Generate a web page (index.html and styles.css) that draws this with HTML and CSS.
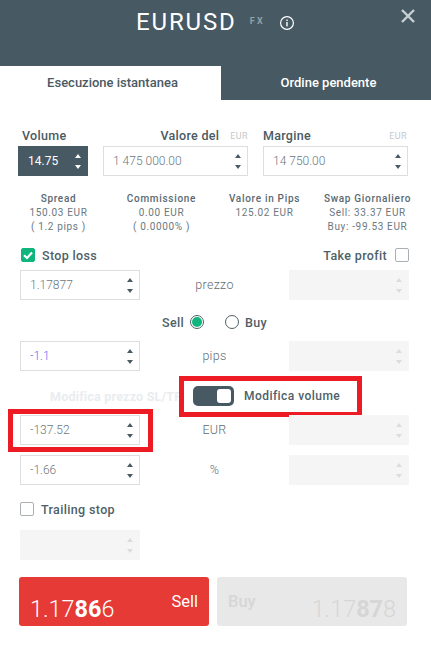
FILE: index.html
```html
<!DOCTYPE html>
<html lang="it">
<head>
<meta charset="utf-8">
<title>EURUSD</title>
<link rel="stylesheet" href="styles.css">
</head>
<body>
<div class="app">
  <header class="head">
    <h1 class="title">EURUSD</h1>
    <span class="fx">FX</span>
    <svg class="info" viewBox="0 0 16 16" width="16" height="16"><circle cx="8" cy="8" r="6.4" fill="none" stroke="#fff" stroke-width="1.2"/><rect x="7.3" y="7" width="1.4" height="4.4" fill="#fff"/><rect x="7.3" y="4.6" width="1.4" height="1.4" fill="#fff"/></svg>
    <svg class="close" viewBox="0 0 16 16" width="16" height="16"><path d="M2 2L14 14M14 2L2 14" stroke="#c9d0d3" stroke-width="2.4" fill="none"/></svg>
  </header>
  <nav class="tabs">
    <div class="tab active">Esecuzione istantanea</div>
    <div class="tab">Ordine pendente</div>
  </nav>

  <section class="top">
    <div class="top-col col-vol">
      <div class="top-label"><b>Volume</b></div>
      <div class="box dark"><span class="val">14.75</span><span class="spin"><i class="up"></i><i class="down"></i></span></div>
    </div>
    <div class="top-col col-val">
      <div class="top-label"><b class="push">Valore del</b><span class="unit">EUR</span></div>
      <div class="box"><span class="val">1 475 000.00</span><span class="spin"><i class="up"></i><i class="down"></i></span></div>
    </div>
    <div class="top-col col-mar">
      <div class="top-label"><b>Margine</b><span class="unit far">EUR</span></div>
      <div class="box"><span class="val">14 750.00</span><span class="spin"><i class="up"></i><i class="down"></i></span></div>
    </div>
  </section>

  <section class="stats">
    <div class="stat"><b>Spread</b><span>150.03 EUR</span><span>( 1.2 pips )</span></div>
    <div class="stat"><b>Commissione</b><span>0.00 EUR</span><span>( 0.0000% )</span></div>
    <div class="stat"><b>Valore in Pips</b><span>125.02 EUR</span></div>
    <div class="stat"><b>Swap Giornaliero</b><span>Sell: 33.37 EUR</span><span>Buy: -99.53 EUR</span></div>
  </section>

  <section class="form">
    <div class="check-row">
      <span class="check on"><svg viewBox="0 0 14 14" width="14" height="14"><path d="M3 7.2L6 10L11 4.6" fill="none" stroke="#fff" stroke-width="2.2"/></svg></span>
      <span class="lbl">Stop loss</span>
      <span class="lbl tp">Take profit</span>
      <span class="check"></span>
    </div>
    <div class="row">
      <div class="box"><span class="val">1.17877</span><span class="spin"><i class="up"></i><i class="down"></i></span></div>
      <div class="mid">prezzo</div>
      <div class="box off"><span class="val"></span><span class="spin"><i class="up"></i><i class="down"></i></span></div>
    </div>
    <div class="side-row">
      <span class="lbl">Sell</span><span class="radio on"></span>
      <span class="radio second"></span><span class="lbl">Buy</span>
    </div>
    <div class="row">
      <div class="box"><span class="val blue">-1.1</span><span class="spin"><i class="up"></i><i class="down"></i></span></div>
      <div class="mid">pips</div>
      <div class="box off"><span class="val"></span><span class="spin"><i class="up"></i><i class="down"></i></span></div>
    </div>
    <div class="mod-row">
      <span class="ghost">Modifica prezzo SL/TP</span>
      <span class="mark mark-a"></span>
      <span class="toggle"><i></i></span>
      <span class="lbl mod">Modifica volume</span>
    </div>
    <div class="row">
      <div class="box"><span class="val">-137.52</span><span class="spin"><i class="up"></i><i class="down"></i></span><span class="mark mark-b"></span></div>
      <div class="mid">EUR</div>
      <div class="box off"><span class="val"></span><span class="spin"><i class="up"></i><i class="down"></i></span></div>
    </div>
    <div class="row row-pct">
      <div class="box"><span class="val">-1.66</span><span class="spin"><i class="up"></i><i class="down"></i></span></div>
      <div class="mid">%</div>
      <div class="box off"><span class="val"></span><span class="spin"><i class="up"></i><i class="down"></i></span></div>
    </div>
    <div class="check-row trailing">
      <span class="check"></span>
      <span class="lbl">Trailing stop</span>
    </div>
    <div class="row row-trail">
      <div class="box off"><span class="val"></span><span class="spin"><i class="up"></i><i class="down"></i></span></div>
    </div>
  </section>

  <section class="actions">
    <div class="btn sell"><span class="price">1.17<b>86</b>6</span><span class="side">Sell</span></div>
    <div class="btn buy"><span class="side">Buy</span><span class="price">1.17<b>87</b>8</span></div>
  </section>
</div>
</body>
</html>
```

FILE: styles.css
```css
* { box-sizing: border-box; }
html, body { margin: 0; padding: 0; background: #fff; }
body { font-family: Roboto, "Liberation Sans", sans-serif; color: #4a5a63; }
.app { width: 431px; height: 646px; overflow: hidden; position: relative; }

.head { height: 66px; background: #475962; display: flex; align-items: flex-start; padding-top: 8px; position: relative; }
.title { margin: 0 0 0 136px; font-size: 24px; font-weight: 400; letter-spacing: 1.85px; line-height: 28px; color: #fff; }
.fx { margin: 7px 0 0 13px; font-size: 9px; font-weight: 700; letter-spacing: 2.4px; line-height: 12px; color: #93a0a7; }
.info { margin: 7px 0 0 14px; }
.close { position: absolute; left: 400px; top: 8px; }

.tabs { display: flex; height: 34px; background: #475962; }
.tab { flex: 0 0 210px; padding-left: 5px; font-size: 13px; font-weight: 500; line-height: 34px; text-align: center; color: #fff; }
.tab.active { flex: 0 0 221px; padding-left: 4px; background: #fff; color: #4a5a63; }

.top { display: flex; padding: 27px 0 0 18px; }
.top-col { display: flex; flex-direction: column; }
.col-vol { width: 70px; margin-right: 15px; }
.col-val { width: 145px; margin-right: 15px; }
.col-mar { width: 145px; }
.top-label { height: 19px; padding-bottom: 2px; display: flex; align-items: center; font-size: 12.5px; line-height: 16px; padding-left: 4px; }
.top-label b { font-weight: 500; letter-spacing: .3px; }
.col-val .top-label b { margin-left: auto; }
.col-mar .top-label { padding-left: 0; }
.unit { font-size: 9px; color: #c4c9cc; letter-spacing: .4px; margin-left: 11px; }
.unit.far { margin-left: auto; margin-right: 1px; }

.box { height: 30px; border: 1px solid #dcdedf; display: flex; align-items: center; position: relative; background: #fff; padding-left: 9px; }
.val { flex: 1; font-size: 12px; font-weight: 300; color: #6b7880; }
.blue { color: #4f6ef5; }
.spin { display: flex; flex-direction: column; width: 10px; margin-right: 4px; gap: 7px; align-items: center; }
.spin i { display: block; width: 0; height: 0; border-left: 3px solid transparent; border-right: 3px solid transparent; }
.spin .up { border-bottom: 4px solid #4a5a63; }
.spin .down { border-top: 4px solid #4a5a63; }

.dark { background: #475962; border-color: #475962; }
.dark .val { color: #fff; font-weight: 400; }
.dark .spin .up { border-bottom-color: #fff; }
.dark .spin .down { border-top-color: #fff; }

.stats { position: relative; display: grid; grid-template-columns: repeat(4, 103px); padding: 16px 0 0 7px; height: 65px; }
.stat { display: flex; flex-direction: column; align-items: center; font-size: 10px; line-height: 14px; letter-spacing: .65px; color: #6b7880; white-space: nowrap; }
.stat b { font-weight: 500; color: #5a6972; letter-spacing: .7px; }

.form { padding: 0 22px 0 20px; }
.check-row { display: flex; align-items: center; height: 20px; margin-top: 4px; }
.check { width: 14px; height: 14px; border: 1px solid #a9afb2; border-radius: 2px; display: block; flex: none; }
.check.on { background: #0fb57d; border-color: #0fb57d; margin-left: 1px; position: relative; }
.check.on svg { position: absolute; left: -1px; top: -1px; }
.lbl { font-size: 12.5px; font-weight: 500; letter-spacing: .35px; color: #4f5f68; }
.check + .lbl { margin-left: 7px; }
.tp { margin-left: auto; margin-right: 8px; }

.row { display: grid; grid-template-columns: 120px 1fr 120px; }
.check-row + .row { margin-top: 5px; }
.mid { text-align: center; font-size: 12.5px; font-weight: 300; line-height: 30px; color: #5f6d75; letter-spacing: .3px; }
.off { background: #f5f5f5; border-color: #f5f5f5; }
.off .up { border-bottom-color: #dcdcdc; }
.off .down { border-top-color: #dcdcdc; }

.side-row { display: flex; align-items: center; height: 41px; padding: 3px 0 0 142px; }
.radio { width: 14px; height: 14px; border-radius: 50%; border: 1px solid #4f5f68; margin-left: 6px; position: relative; flex: none; }
.radio.on::after { content: ""; position: absolute; left: 1px; top: 1px; width: 10px; height: 10px; border-radius: 50%; background: #0fb57d; }
.radio.second { margin-left: 21px; margin-right: 6px; }

.mod-row { display: flex; align-items: center; height: 44px; position: relative; padding: 6px 0 0 173px; }
.ghost { position: absolute; left: 30px; font-size: 12.5px; font-weight: 700; color: #e9edf0; white-space: nowrap; letter-spacing: .2px; }
.toggle { position: relative; z-index: 1; width: 41px; height: 20px; border-radius: 5px; background: #475962; flex: none; }
.toggle i { position: absolute; right: 3px; top: 3px; width: 14px; height: 14px; border-radius: 3px; background: #fff; }
.mod { position: relative; z-index: 1; margin-left: 10px; font-size: 12px; letter-spacing: .45px; }

.mark { position: absolute; border: 5px solid #ed1c24; pointer-events: none; }
.mark-a { left: 159px; top: 5px; width: 183px; height: 41px; background: #fff; }
.mark-b { left: -13px; top: -7px; width: 145px; height: 43px; }

.row-pct { margin-top: 10px; }
.trailing { margin-top: 14px; margin-bottom: 11px; }
.check-row.trailing + .row { margin-top: 0; }

.actions { display: flex; gap: 8px; padding: 17px 0 0 19px; }
.btn { width: 190px; height: 49px; border-radius: 3px; position: relative; display: flex; justify-content: space-between; padding: 0 11px; }
.sell { background: #e53a35; color: #fff; }
.buy { background: #e8e8e8; color: #d6d6d6; }
.price { font-size: 23.4px; font-weight: 300; line-height: 28px; padding-top: 18px; white-space: nowrap; }
.price b { font-weight: 700; }
.side { font-size: 16.5px; line-height: 20px; padding-top: 15px; }
.buy .side { font-weight: 500; }
```
